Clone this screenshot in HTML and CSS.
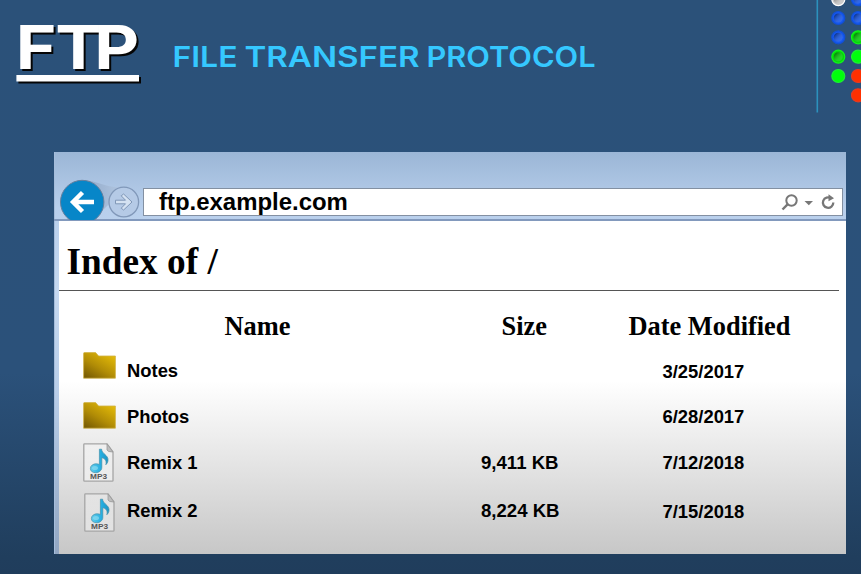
FILE: index.html
```
<!DOCTYPE html>
<html lang="en">
<head>
<meta charset="utf-8">
<title>FTP</title>
<link rel="stylesheet" href="styles.css">
</head>
<body>
<svg class="defs" width="0" height="0" aria-hidden="true">
  <defs>
    <linearGradient id="gold" x1="0" y1="1" x2=".75" y2="0"><stop offset="0" stop-color="#705503"/><stop offset=".5" stop-color="#b28d06"/><stop offset="1" stop-color="#e2b908"/></linearGradient>
    <linearGradient id="paper" x1="0" y1="0" x2="0" y2="1"><stop offset="0" stop-color="#fff" stop-opacity=".25"/><stop offset="1" stop-color="#fff" stop-opacity=".4"/></linearGradient>
    <linearGradient id="note" x1="0" y1="0" x2="1" y2="0"><stop offset="0" stop-color="#62cdeb"/><stop offset=".6" stop-color="#24ade0"/><stop offset="1" stop-color="#1c94c4"/></linearGradient>
    <linearGradient id="ball" x1="0" y1="0" x2="1" y2="1"><stop offset=".15" stop-color="#000" stop-opacity=".4"/><stop offset=".9" stop-color="#fff" stop-opacity=".08"/></linearGradient>
    <symbol id="folder" viewBox="0 0 33 27"><path d="M.6 1.4Q.6.6 1.4.6H12.6L15.6 4H32.4V26.2H.6Z" fill="url(#gold)" stroke="#d0b347" stroke-width=".8"/></symbol>
    <symbol id="mp3" viewBox="0 0 31 39">
      <path d="M1.5.8H24L30 9V37.5Q30 38.2 29.3 38.2H1.5Q.8 38.2.8 37.5V1.5Q.8.8 1.5.8Z" fill="url(#paper)" stroke="#a5a5a5" stroke-width="1.3"/>
      <path d="M24 .8V7Q24.5 9 30 9Z" fill="#bdbdbd" stroke="#999" stroke-width=".8"/>
      <path d="M16.400 6.200H18.600C18.800 11 25.500 12 25 17.300C24.900 19.400 23.800 20.800 22.800 21.700C24 17.600 21.900 15.400 18.800 14.700V24.400C18.800 27.500 16 29.700 12.400 29.700C9.200 29.700 7.400 27.800 7.400 25.500C7.400 22.600 10.100 20.800 13.100 20.800C14.600 20.800 15.700 21.100 16.400 21.500Z" fill="url(#note)" stroke="#4590aa" stroke-width=".7"/>
      <ellipse cx="12" cy="25" rx="3" ry="2" fill="#8bdcf1" opacity=".7"/>
      <text x="7" y="35.600" textLength="17" lengthAdjust="spacingAndGlyphs" class="mp3-label">MP3</text>
    </symbol>
  </defs>
</svg>
<header class="banner">
  <svg class="logo" width="150" height="100"><text x="13.500 47.600 81.300" y="69.500" transform="scale(1.160 1)">FTP</text><path d="M16.400 75H139V81.500H16.400Z"/></svg>
  <svg class="subtitle" width="450" height="100">
    <text x="20.500" y="67" textLength="65" lengthAdjust="spacingAndGlyphs">FILE</text>
    <text x="92.500" y="67" textLength="175" lengthAdjust="spacingAndGlyphs">TRANSFER</text>
    <text x="274.500" y="67" textLength="169" lengthAdjust="spacingAndGlyphs">PROTOCOL</text>
  </svg>
  <svg class="lights" width="46" height="113">
    <path d="M2.300 0V112.500" stroke="#2c91bd" stroke-width="1.600"/>
    <g stroke-width="1.200">
      <g fill="#c9c9c9" stroke="#fff"><circle cx="23.300" cy="-.8" r="6.500"/></g>
      <g fill="#1557ef" stroke="#1350d2"><circle cx="43" cy="-.8" r="6.500"/><circle cx="23.300" cy="18" r="6.500"/><circle cx="43" cy="18" r="6.500"/><circle cx="23.300" cy="37.300" r="6.500"/></g>
      <g fill="#05d909" stroke="#12f31b"><circle cx="43" cy="37.300" r="6.500"/><circle cx="23.300" cy="56.700" r="6.500"/></g>
      <g fill="#00ff0c" stroke="#20ed37"><circle cx="43" cy="56.700" r="6.500"/><circle cx="23.300" cy="76" r="6.500"/></g>
      <g fill="#ff3000" stroke="#e63b21"><circle cx="43" cy="76" r="6.500"/><circle cx="43" cy="95.300" r="6.500"/></g>
    </g>
    <g fill="url(#ball)"><circle cx="23.300" cy="-.8" r="4.500"/><circle cx="43" cy="-.8" r="4.500"/><circle cx="23.300" cy="18" r="4.500"/><circle cx="43" cy="18" r="4.500"/><circle cx="23.300" cy="37.300" r="4.500"/><circle cx="43" cy="37.300" r="4.500"/><circle cx="23.300" cy="56.700" r="4.500"/></g>
  </svg>
</header>
<main class="window">
  <div class="toolbar">
    <svg class="nav" width="89" height="68">
      <defs><linearGradient id="neck" x1="0" y1="0" x2="1" y2="0"><stop stop-color="#8fa8c8"/><stop offset="1" stop-color="#b4c8e2"/></linearGradient></defs>
      <path d="M29 28C45 29 54 37 70 35L56 51L45 62Z" fill="url(#neck)"/>
      <circle cx="28.200" cy="50" r="21.700" fill="#0786c8" stroke="#667f9d" stroke-width="1"/>
      <path d="M40 50H20M28.500 40.500L19 50L28.500 59.500" fill="none" stroke="#fff" stroke-width="4.400"/>
      <circle cx="69.800" cy="50" r="14.800" fill="#b5cae6" stroke="#8198b9" stroke-width="1.300"/>
      <path d="M61.500 48.200H71.500L67.200 43.800L69.600 42L78 50L69.600 58L67.200 56.200L71.500 51.800H61.500Z" fill="#d5e2f2" stroke="#8097b7" stroke-width="1"/>
    </svg>
    <div class="address">
      <span>ftp.example.com</span>
      <svg width="64" height="25" fill="none" stroke="#777">
        <circle cx="13.500" cy="10.500" r="5.200" stroke-width="2"/><path d="M9.800 14.200L4.500 19.500" stroke-width="2.400"/>
        <path d="M26.500 11H35L30.800 15.200Z" fill="#777" stroke="none"/>
        <path d="M53 8.300A5.200 5.200 0 1 0 55.300 12.500" stroke-width="2.300"/><path d="M50.500 4.300V11.300L56 8.200Z" fill="#777" stroke="none"/>
      </svg>
    </div>
  </div>
  <div class="page">
    <h1>Index of /</h1>
    <div class="listing">
      <div class="row head"><b class="name">Name</b><b class="size">Size</b><b class="date">Date Modified</b></div>
      <div class="row"><svg class="folder first"><use href="#folder"/></svg><span class="name">Notes</span><span class="date low">3/25/2017</span></div>
      <div class="row"><svg class="folder"><use href="#folder"/></svg><span class="name">Photos</span><span class="date">6/28/2017</span></div>
      <div class="row"><svg class="mp3"><use href="#mp3"/></svg><span class="name">Remix 1</span><span class="size">9,411 KB</span><span class="date">7/12/2018</span></div>
      <div class="row last"><svg class="mp3"><use href="#mp3"/></svg><span class="name">Remix 2</span><span class="size">8,224 KB</span><span class="date low">7/15/2018</span></div>
    </div>
  </div>
</main>
</body>
</html>
```
FILE: styles.css
```
* { box-sizing: border-box; }
body {
  margin: 0;
  width: 861px;
  height: 574px;
  overflow: hidden;
  background: linear-gradient(#2b5179 0, #2b517a 65%, #203e5d 97%, #203d5c 100%);
}
svg { display: block; flex: none; }
.defs { position: absolute; }
.banner { display: flex; height: 152px; }
.logo {
  fill: #fff;
  font: 700 59.8px Inter, sans-serif;
  filter: drop-shadow(2px 2px 0 #050505);
}
.subtitle { margin-left: 2px; fill: #35c8ff; font: 600 28.8px Inter, sans-serif; }
.lights { margin-left: auto; }
.window {
  width: 792px;
  height: 402px;
  margin-left: 54px;
  padding-left: 5px;
  background: linear-gradient(#9bb6d6 0, #b8cfec 55px, #c5d8f0 140px, #b9cee9 240px, #91a6c2 100%);
  box-shadow: inset 1px 0 #a5bddb;
}
.toolbar { display: flex; height: 69px; margin-left: -5px; border-bottom: 2px solid #8299bd; }
.nav { margin-bottom: -1px; }
.address {
  display: flex;
  align-items: center;
  justify-content: space-between;
  width: 700px;
  height: 28px;
  margin-top: 36px;
  padding-left: 15px;
  border: 1.5px solid #8390a2;
  background: #fff;
  font: 700 23.95px/27px "Liberation Sans", sans-serif;
}
.address span { margin-top: -2px; }
.address svg { margin-top: 1px; }
.page {
  height: 333px;
  background: linear-gradient(#fff 0, #fff 48%, #eee 64%, #c7c7c7 100%);
}
h1 {
  height: 70px;
  margin: 0 7px 0 0;
  padding: 19px 0 0 7.5px;
  border-bottom: 1.5px solid #555;
  font: 700 37.3px/43px "Liberation Serif", serif;
}
.listing { padding-top: 12px; font: 700 18.4px/22px "Liberation Sans", sans-serif; }
.row {
  display: grid;
  grid-template-columns: 24px 44px 354px 181.5px 1fr;
  align-items: center;
  height: 46px;
}
.name { grid-column: 3; }
.size { grid-column: 4; }
.date { grid-column: 5; }
.row > .size { font-size: 18.6px; }
.row > .low { margin-top: 1px; }
.head { height: 45px; font: 700 26.4px/30px "Liberation Serif", serif; }
.head .name { padding-left: 97.5px; }
.head > .size { padding-left: 20.5px; font-size: 26.4px; }
.head > .date { margin: 0 0 0 -34px; }
.folder, .mp3 { grid-column: 2; grid-row: 1; }
.name, .size, .date { grid-row: 1; }
.folder { width: 33px; height: 27px; margin-top: -4px; }
.folder.first { margin-top: -12px; }
.mp3 { width: 31px; height: 39px; margin-top: -2px; }
.last { height: 50px; }
.last .mp3 { margin: 2px 0 0 1px; }
.mp3-label { fill: #555; font: 700 6.4px "Liberation Sans", sans-serif; }
```
